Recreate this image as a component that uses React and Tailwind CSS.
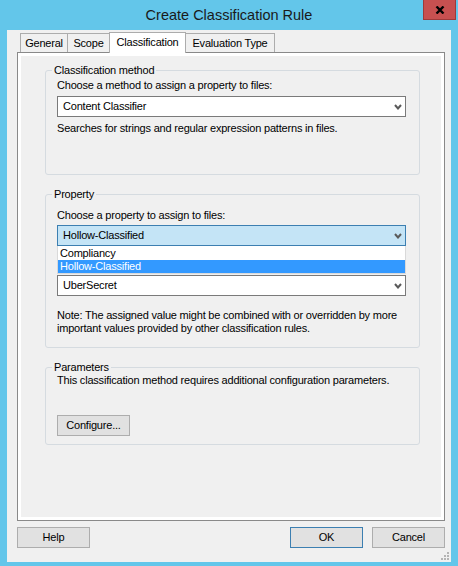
import React from 'react';

const font = { fontFamily: '"Liberation Sans", Arial, sans-serif' };

function Chevron() {
  return (
    <svg width="8" height="6" viewBox="0 0 8 6" className="shrink-0" aria-hidden="true">
      <path d="M1 1 L4 4.5 L7 1" fill="none" stroke="#5a5a5a" strokeWidth="2" />
    </svg>
  );
}

function Select({ value, active }) {
  return (
    <div
      className={`flex h-[21px] w-[349px] items-center justify-between border pl-[5px] pr-[3px] ${
        active ? 'border-[#3c7fb1] bg-[#c4e4f6]' : 'border-[#7a7a7a] bg-white'
      }`}
    >
      <span className="leading-[13px]">{value}</span>
      <Chevron />
    </div>
  );
}

function GroupBox({ label, className, children }) {
  return (
    <div className={`relative ml-[24px] w-[375px] rounded-[3px] border border-[#d5dbe0] pl-[11px] ${className}`}>
      <span className="absolute -top-[7px] left-[6px] bg-[#f0f0f0] px-[2px] leading-[13px]">{label}</span>
      {children}
    </div>
  );
}

function Button({ children, primary }) {
  return (
    <button
      type="button"
      className={`flex h-[21px] w-[73px] items-center justify-center border bg-[#e1e1e1] leading-[13px] ${
        primary ? 'border-[#3c7fb1]' : 'border-[#adadad]'
      }`}
    >
      {children}
    </button>
  );
}

const tabs = [
  { label: 'General', w: 'w-[48px]' },
  { label: 'Scope', w: 'w-[43px]' },
  { label: 'Classification', w: 'w-[77px]', active: true },
  { label: 'Evaluation Type', w: 'w-[90px]' },
];

export default function App() {
  return (
    <div className="flex h-[566px] w-[458px] flex-col bg-[#63c6ea] text-[11px] tracking-[-0.2px] text-black" style={font}>
      <div className="relative flex h-[30px] shrink-0 items-center justify-center tracking-normal">
        <span className="text-[14.5px] leading-[18px] text-[#1a1a1a]">Create Classification Rule</span>
        <div className="absolute right-[2px] top-0 flex h-[20px] w-[33px] items-center justify-center border border-t-0 border-[#9e3a3a] bg-[#c75050]">
          <svg width="10" height="8" viewBox="0 0 10 8" aria-hidden="true">
            <path d="M1.5 0.5 L8.5 7.5 M8.5 0.5 L1.5 7.5" stroke="#000" strokeWidth="2.4" />
          </svg>
        </div>
      </div>

      <div className="relative mx-[7px] flex h-[532px] flex-col bg-[#f0f0f0] pl-[10px] pr-[6px] pt-[2px]">
        <div className="flex h-[20px] items-end pl-[3px]">
          {tabs.map((t) =>
            t.active ? (
              <div
                key={t.label}
                className={`relative z-10 -mb-px -ml-px flex h-[21px] items-center justify-center border border-b-0 border-[#acacac] bg-white pb-[2px] ${t.w}`}
              >
                {t.label}
              </div>
            ) : (
              <div
                key={t.label}
                className={`-ml-px flex h-[19px] items-center justify-center border border-b-0 border-[#acacac] bg-[#f0f0f0] pt-[1px] first:ml-0 ${t.w}`}
              >
                {t.label}
              </div>
            )
          )}
        </div>

        <div className="flex h-[469px] flex-col border border-[#898989] bg-white p-[3px]">
          <div className="flex flex-1 flex-col bg-[#f0f0f0] pt-[14px]">
            <GroupBox label="Classification method" className="h-[105px] pt-[8px]">
              <div className="leading-[13px]">Choose a method to assign a property to files:</div>
              <div className="mt-[4px]">
                <Select value="Content Classifier" />
              </div>
              <div className="mt-[5px] leading-[13px]">Searches for strings and regular expression patterns in files.</div>
            </GroupBox>

            <GroupBox label="Property" className="mt-[19px] h-[154px] pt-[14px]">
              <div className="leading-[13px]">Choose a property to assign to files:</div>
              <div className="mt-[3px]">
                <Select value="Hollow-Classified" active />
              </div>
              <div className="w-[349px] border border-t-0 border-[#d9d9d9] bg-white">
                <div className="flex h-[14px] items-center pl-[2px] leading-[13px]">Compliancy</div>
                <div className="flex h-[13px] items-center bg-[#3399ff] pl-[2px] leading-[13px] text-white">
                  Hollow-Classified
                </div>
              </div>
              <div className="mt-[1px]">
                <Select value="UberSecret" />
              </div>
              <div className="mt-[13px] leading-[13px]">
                Note: The assigned value might be combined with or overridden by more
                <br />
                important values provided by other classification rules.
              </div>
            </GroupBox>

            <GroupBox label="Parameters" className="mt-[19px] h-[78px] pt-[6px]">
              <div className="leading-[13px]">This classification method requires additional configuration parameters.</div>
              <div className="mt-[28px]">
                <Button>Configure...</Button>
              </div>
            </GroupBox>
          </div>
        </div>

        <div className="mt-[6px] flex items-center">
          <Button>Help</Button>
          <div className="ml-auto flex gap-[9px]">
            <Button primary>OK</Button>
            <Button>Cancel</Button>
          </div>
        </div>

        <svg width="8" height="8" viewBox="0 0 8 8" className="absolute bottom-[2px] right-[2px]" aria-hidden="true">
          <g fill="#b4b4b4">
            <rect x="6" y="0" width="2" height="2" />
            <rect x="3" y="3" width="2" height="2" />
            <rect x="6" y="3" width="2" height="2" />
            <rect x="0" y="6" width="2" height="2" />
            <rect x="3" y="6" width="2" height="2" />
            <rect x="6" y="6" width="2" height="2" />
          </g>
        </svg>
      </div>
    </div>
  );
}
